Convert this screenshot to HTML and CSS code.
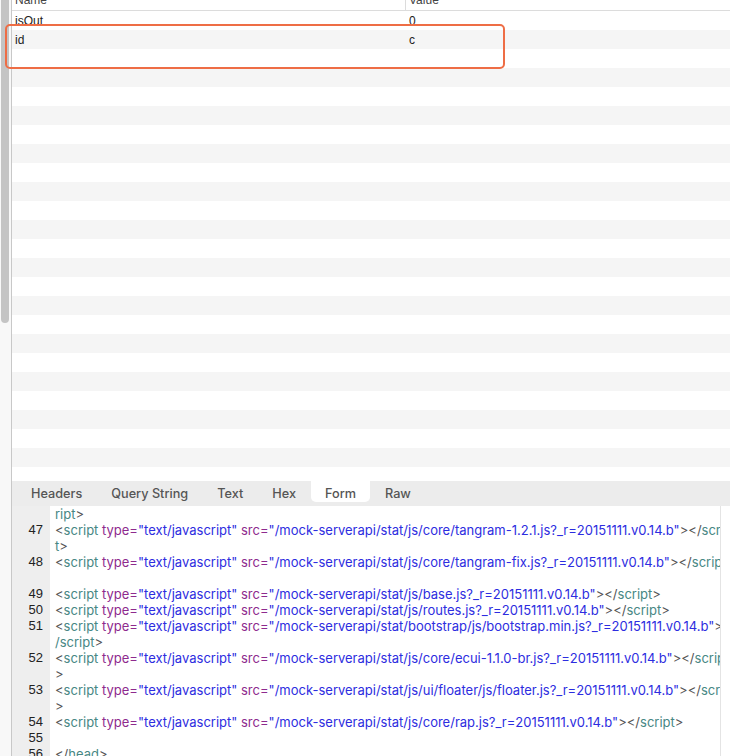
FILE: index.html
```html
<!DOCTYPE html>
<html lang="en">
<head>
    <meta charset="UTF-8">
    <title>Form</title>
    <link rel="stylesheet" href="styles.css">
</head>
<body>
    <div class="gutter"><div class="thumb"></div></div>

    <div class="main">
        <!-- params table -->
        <div class="grid">
            <div class="grid-head">
                <div class="cell">Name</div>
                <div class="cell val">Value</div>
            </div>
            <div class="rows">
                <div class="row"><div class="cell">isOut</div><div class="cell">0</div></div>
                <div class="row"><div class="cell">id</div><div class="cell">c</div></div>
                <div class="row"></div><div class="row"></div><div class="row"></div>
                <div class="row"></div><div class="row"></div><div class="row"></div>
                <div class="row"></div><div class="row"></div><div class="row"></div>
                <div class="row"></div><div class="row"></div><div class="row"></div>
                <div class="row"></div><div class="row"></div><div class="row"></div>
                <div class="row"></div><div class="row"></div><div class="row"></div>
                <div class="row"></div><div class="row"></div><div class="row"></div>
                <div class="row"></div>
            </div>
        </div>

        <div class="tabs">
            <div class="tab">Headers</div>
            <div class="tab">Query String</div>
            <div class="tab">Text</div>
            <div class="tab">Hex</div>
            <div class="tab on">Form</div>
            <div class="tab">Raw</div>
        </div>

        <!-- response source -->
        <div class="code">
            <div class="lines">
                <div class="ln"><span class="num"></span><span class="src"><span class="t">ript</span><span class="p">&gt;</span></span></div>
                <div class="ln"><span class="num">47</span><span class="src"><span class="p">&lt;</span><span class="t">script</span> <span class="a">type=</span><span class="v">"text/javascript"</span> <span class="a">src=</span><span class="v">"/mock-serverapi/stat/js/core/tangram-1.2.1.js?_r=20151111.v0.14.b"</span><span class="p">&gt;&lt;/</span><span class="t">scri</span></span></div>
                <div class="ln"><span class="num"></span><span class="src"><span class="t">t</span><span class="p">&gt;</span></span></div>
                <div class="ln"><span class="num">48</span><span class="src"><span class="p">&lt;</span><span class="t">script</span> <span class="a">type=</span><span class="v">"text/javascript"</span> <span class="a">src=</span><span class="v">"/mock-serverapi/stat/js/core/tangram-fix.js?_r=20151111.v0.14.b"</span><span class="p">&gt;&lt;/</span><span class="t">script</span><span class="p">&gt;</span></span></div>
                <div class="ln"><span class="num"></span><span class="src"> </span></div>
                <div class="ln"><span class="num">49</span><span class="src"><span class="p">&lt;</span><span class="t">script</span> <span class="a">type=</span><span class="v">"text/javascript"</span> <span class="a">src=</span><span class="v">"/mock-serverapi/stat/js/base.js?_r=20151111.v0.14.b"</span><span class="p">&gt;&lt;/</span><span class="t">script</span><span class="p">&gt;</span></span></div>
                <div class="ln"><span class="num">50</span><span class="src"><span class="p">&lt;</span><span class="t">script</span> <span class="a">type=</span><span class="v">"text/javascript"</span> <span class="a">src=</span><span class="v">"/mock-serverapi/stat/js/routes.js?_r=20151111.v0.14.b"</span><span class="p">&gt;&lt;/</span><span class="t">script</span><span class="p">&gt;</span></span></div>
                <div class="ln"><span class="num">51</span><span class="src"><span class="p">&lt;</span><span class="t">script</span> <span class="a">type=</span><span class="v">"text/javascript"</span> <span class="a">src=</span><span class="v">"/mock-serverapi/stat/bootstrap/js/bootstrap.min.js?_r=20151111.v0.14.b"</span><span class="p">&gt;&lt;</span></span></div>
                <div class="ln"><span class="num"></span><span class="src"><span class="t">/script</span><span class="p">&gt;</span></span></div>
                <div class="ln"><span class="num">52</span><span class="src"><span class="p">&lt;</span><span class="t">script</span> <span class="a">type=</span><span class="v">"text/javascript"</span> <span class="a">src=</span><span class="v">"/mock-serverapi/stat/js/core/ecui-1.1.0-br.js?_r=20151111.v0.14.b"</span><span class="p">&gt;&lt;/</span><span class="t">scrip</span></span></div>
                <div class="ln"><span class="num"></span><span class="src"><span class="p">&gt;</span></span></div>
                <div class="ln"><span class="num">53</span><span class="src"><span class="p">&lt;</span><span class="t">script</span> <span class="a">type=</span><span class="v">"text/javascript"</span> <span class="a">src=</span><span class="v">"/mock-serverapi/stat/js/ui/floater/js/floater.js?_r=20151111.v0.14.b"</span><span class="p">&gt;&lt;/</span><span class="t">scrip</span></span></div>
                <div class="ln"><span class="num"></span><span class="src"><span class="p">&gt;</span></span></div>
                <div class="ln"><span class="num">54</span><span class="src"><span class="p">&lt;</span><span class="t">script</span> <span class="a">type=</span><span class="v">"text/javascript"</span> <span class="a">src=</span><span class="v">"/mock-serverapi/stat/js/core/rap.js?_r=20151111.v0.14.b"</span><span class="p">&gt;&lt;/</span><span class="t">script</span><span class="p">&gt;</span></span></div>
                <div class="ln"><span class="num">55</span><span class="src"> </span></div>
                <div class="ln"><span class="num">56</span><span class="src"><span class="p">&lt;/</span><span class="t">head</span><span class="p">&gt;</span></span></div>
            </div>
            <div class="vtrack"></div>
        </div>
    </div>

    <!-- highlight drawn over the table -->
    <div class="mark"></div>
</body>
</html>
```

FILE: styles.css
```css
body {
    margin: 0;
    height: 756px;
    overflow: hidden;
    display: flex;
    position: relative;
    font-family: "Liberation Sans", Arial, sans-serif;
    color: #222;
    background: #fff;
}

.gutter {
    flex: none;
    width: 11px;
    background: #f8f8f8;
    border-right: 1px solid #c8c8c8;
}

.thumb {
    width: 8px;
    height: 323px;
    margin-left: 1px;
    background: #c4c4c4;
    border-radius: 0 0 4px 4px;
}

.main {
    flex: 1;
    min-width: 0;
    display: flex;
    flex-direction: column;
}

/* table */
.grid {
    height: 481px;
    overflow: hidden;
    flex: none;
}

.grid-head,
.row {
    display: grid;
    grid-template-columns: 393px 1fr;
    font-size: 12px;
}

.grid-head {
    margin-top: -9px;
    height: 19px;
    line-height: 19px;
    border-bottom: 1px solid #dcdcdc;
    color: #444;
}

.grid-head .val {
    border-left: 1px solid #dcdcdc;
    margin-top: 4px;
    line-height: 11px;
    padding-left: 3px;
}

.cell {
    padding-left: 3px;
    white-space: nowrap;
}

.row {
    height: 19px;
    line-height: 20px;
}

.row .cell + .cell {
    padding-left: 4px;
}

.row:nth-child(even) {
    background: #f5f5f5;
}

/* tabs */
.tabs {
    flex: none;
    display: flex;
    height: 25px;
    padding-left: 5px;
    gap: 1px;
    background: #ececec;
}

.tab {
    height: 21px;
    line-height: 26px;
    padding: 0 14px;
    font-family: Inter, "Liberation Sans", sans-serif;
    font-size: 12.7px;
    font-weight: 500;
    color: #555;
}

.tab.on {
    background: #fff;
    border-radius: 0 0 5px 5px;
}

/* source view */
.code {
    flex: 1;
    display: flex;
    overflow: hidden;
    font-size: 13px;
    line-height: 16px;
}

.lines {
    flex: 1;
    min-width: 0;
    overflow: hidden;
    background: linear-gradient(to right, #eeeeee 38px, #fff 38px);
}

.ln {
    display: grid;
    grid-template-columns: 38px 1fr;
}

.num {
    text-align: right;
    padding-right: 7px;
    color: #222;
}

.src {
    padding-left: 5px;
    white-space: pre;
    overflow: hidden;
    color: #555;
    font-family: Inter, "Liberation Sans", sans-serif;
    font-size: 13px;
}

.vtrack {
    flex: none;
    width: 9px;
    border-left: 1px solid #e4e4e4;
    background: #fff;
}

.t { color: #478784; }
.a { color: #8e2a8e; }
.v { color: #2d2de0; }
.p { color: #555; }

.mark {
    position: absolute;
    left: 5px;
    top: 24px;
    width: 500px;
    height: 45px;
    box-sizing: border-box;
    border: 2px solid #ee6d45;
    border-radius: 5px;
}
```
